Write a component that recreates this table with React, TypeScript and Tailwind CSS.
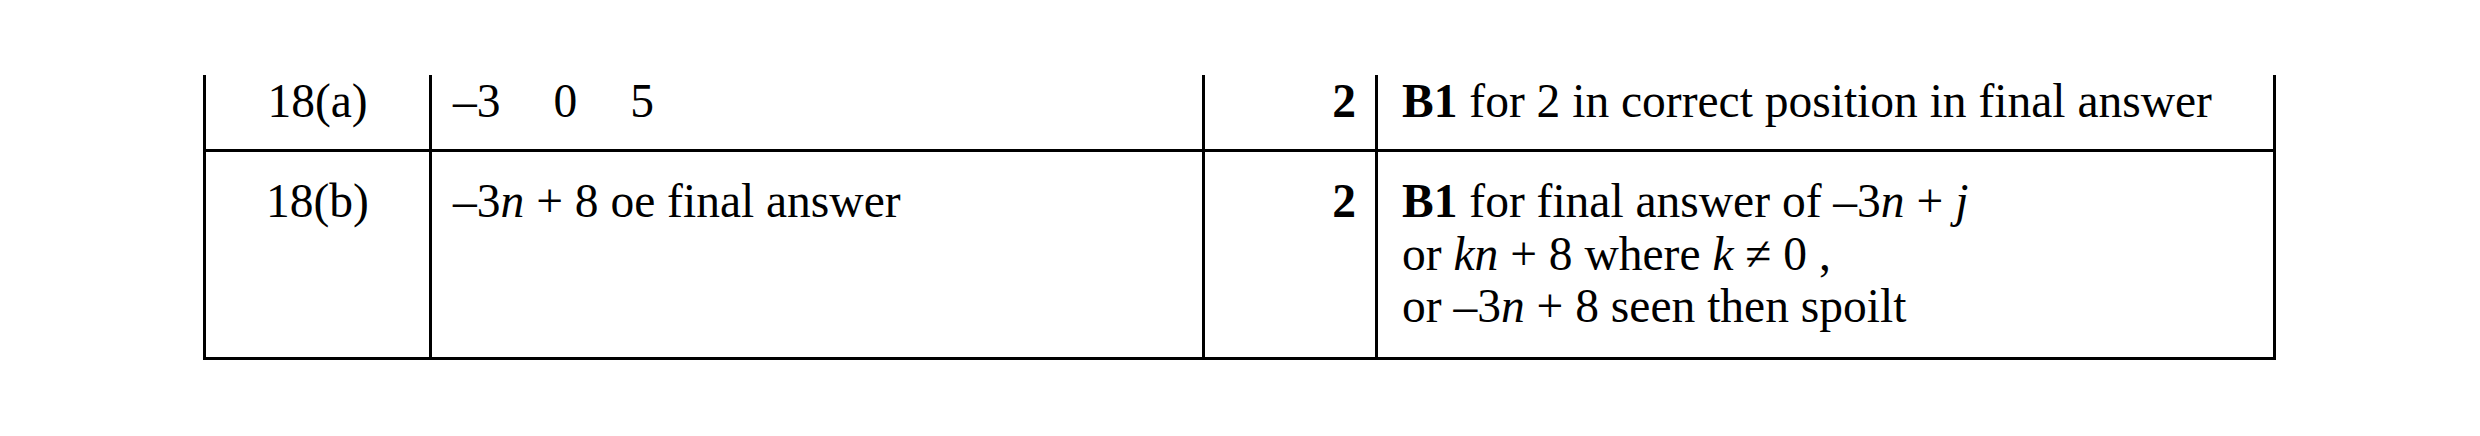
import React from "react";

export default function App() {
  return (
    <div className="w-[2480px] h-[436px] bg-white pt-[75px] pl-[203px] font-['Liberation_Serif',serif] text-[47.5px] leading-[52.5px] text-black">
      <div className="flex w-[2073px] h-[77px] border-l-[3px] border-b-[3px] border-black">
        <div className="w-[226px] shrink-0 border-r-[3px] border-black text-center">18(a)</div>
        <div className="w-[773px] shrink-0 border-r-[3px] border-black pl-[21px] whitespace-nowrap">
          <span>–3</span>
          <span className="ml-[53px]">0</span>
          <span className="ml-[53px]">5</span>
        </div>
        <div className="w-[173px] shrink-0 border-r-[3px] border-black pr-[19px] text-right font-bold">2</div>
        <div className="w-[898px] shrink-0 border-r-[3px] border-black pl-[24px] whitespace-nowrap">
          <b>B1</b> for 2 in correct position in final answer
        </div>
      </div>
      <div className="flex w-[2073px] h-[208px] border-l-[3px] border-b-[3px] border-black">
        <div className="w-[226px] shrink-0 border-r-[3px] border-black text-center pt-[23px]">18(b)</div>
        <div className="w-[773px] shrink-0 border-r-[3px] border-black pl-[21px] pt-[23px] whitespace-nowrap">
          –3<i>n</i> + 8 oe final answer
        </div>
        <div className="w-[173px] shrink-0 border-r-[3px] border-black pr-[19px] pt-[23px] text-right font-bold">2</div>
        <div className="w-[898px] shrink-0 border-r-[3px] border-black pl-[24px] pt-[23px] whitespace-nowrap">
          <div>
            <b>B1</b> for final answer of –3<i>n</i> + <i>j</i>
          </div>
          <div>
            or <i>kn</i> + 8 where <i>k</i> ≠ 0 ,
          </div>
          <div>
            or –3<i>n</i> + 8 seen then spoilt
          </div>
        </div>
      </div>
    </div>
  );
}
